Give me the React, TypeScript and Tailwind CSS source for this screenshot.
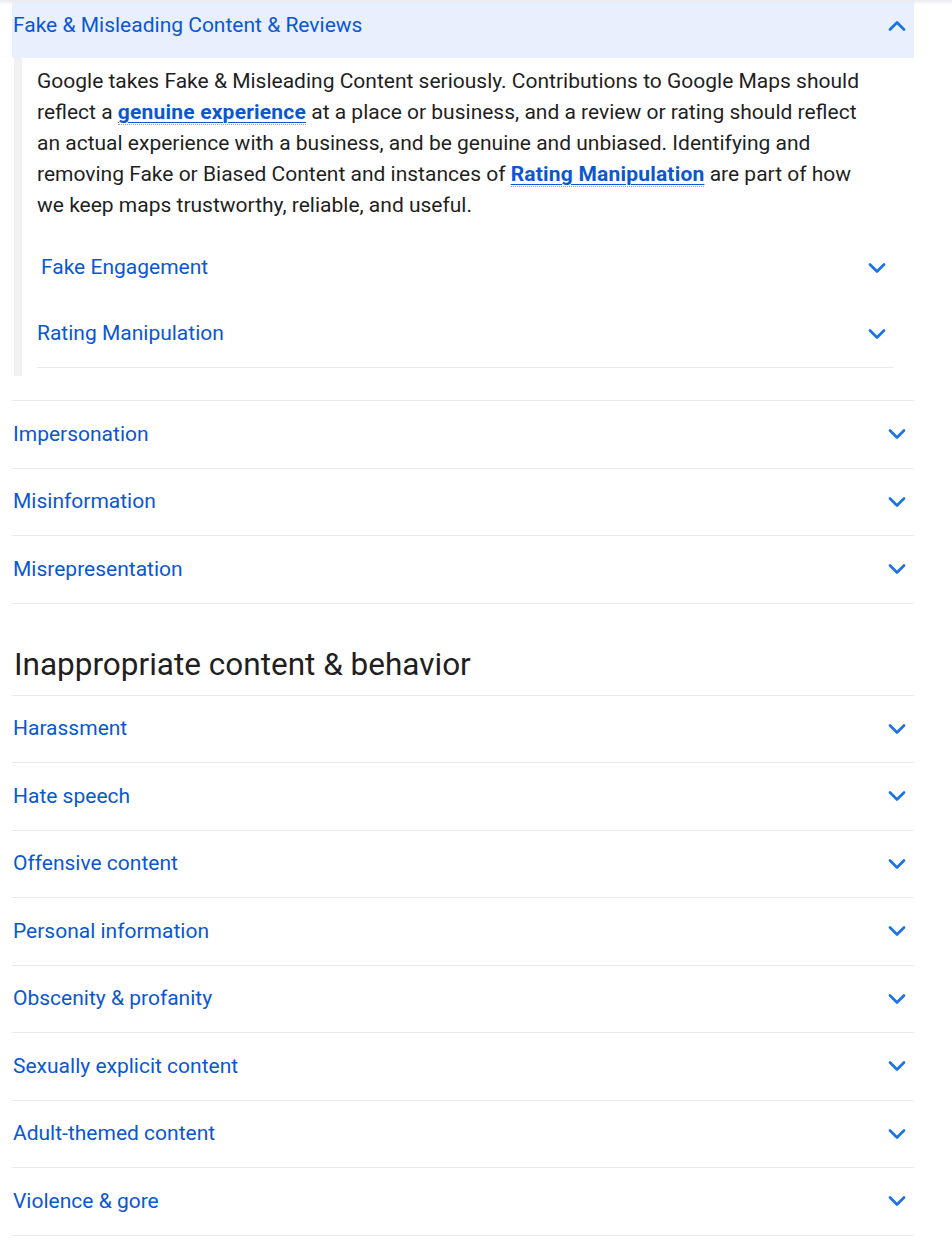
import { ChevronDown, ChevronUp } from "lucide-react"

const policyRows = ["Impersonation", "Misinformation", "Misrepresentation"]

const behaviorRows = [
    "Harassment",
    "Hate speech",
    "Offensive content",
    "Personal information",
    "Obscenity & profanity",
    "Sexually explicit content",
    "Adult-themed content",
    "Violence & gore",
]

function InlineLink({children}: {children: string}) {
    return (
        <a href="#" className="font-bold tracking-[0.2px] text-[#0b57d0] underline decoration-1 underline-offset-[3px] border-b border-dotted border-[#9aa0a6]">
            {children}
        </a>
    )
}

function Row({title}: {title: string}) {
    return (
        <div className="h-[67.5px] border-t border-[#e8eaed] flex items-center justify-between pl-[1px] pr-[3px]">
            <span className="text-[21px] text-[#0b57d0]">{title}</span>
            <ChevronDown className="w-[28px] h-[28px] text-[#1a73e8]" strokeWidth={2.3}/>
        </div>
    )
}

function SubRow({title, indent, tall}: {title: string, indent?: boolean, tall?: boolean}) {
    return (
        <div className={tall ? "h-[67px] flex items-center justify-between pr-[3px]" : "h-[65px] flex items-center justify-between pr-[3px]"}>
            <span className={indent ? "pl-[4px] text-[21px] text-[#0b57d0]" : "text-[21px] text-[#0b57d0]"}>{title}</span>
            <ChevronDown className="w-[28px] h-[28px] text-[#1a73e8]" strokeWidth={2.3}/>
        </div>
    )
}

export default function App() {
    return (
        <div className="relative bg-white min-h-screen font-['Roboto',sans-serif]">
            <div className="absolute top-0 left-0 right-0 h-[5px] bg-gradient-to-b from-[#ececf0] to-transparent"/>

            <div className="w-[902px] ml-[12px]">
                <section>
                    <div className="h-[58px] bg-[#e8f0fe] flex items-center justify-between pl-[1px] pr-[3px] pb-[6px]">
                        <span className="text-[21px] text-[#0b57d0]">Fake &amp; Misleading Content &amp; Reviews</span>
                        <ChevronUp className="w-[28px] h-[28px] text-[#1a73e8]" strokeWidth={2.3}/>
                    </div>

                    <div className="flex">
                        <div className="w-[8px] ml-[2px] bg-[#f1f1f1]"/>
                        <div className="flex-1 pl-[15px] pr-[20px] pb-[8px]">
                            <p className="pt-[8px] text-[21px] leading-[31px] text-[#1f1f1f] whitespace-nowrap">
                                Google takes Fake &amp; Misleading Content seriously. Contributions to Google Maps should<br/>
                                reflect a <InlineLink>genuine experience</InlineLink> at a place or business, and a review or rating should reflect<br/>
                                an actual experience with a business, and be genuine and unbiased. Identifying and<br/>
                                removing Fake or Biased Content and instances of <InlineLink>Rating Manipulation</InlineLink> are part of how<br/>
                                we keep maps trustworthy, reliable, and useful.
                            </p>
                            <div className="mt-[14px] border-b border-[#e8eaed]">
                                <SubRow title="Fake Engagement" indent/>
                                <SubRow title="Rating Manipulation" tall/>
                            </div>
                        </div>
                    </div>
                </section>

                <div className="mt-[24px] border-b border-[#e8eaed]">
                    {policyRows.map(title => <Row key={title} title={title}/>)}
                </div>

                <h2 className="pt-[43px] pb-[12px] pl-[2px] text-[31.5px] leading-[36px] text-[#1f1f1f]">
                    Inappropriate content &amp; behavior
                </h2>

                <div className="border-b border-[#e8eaed]">
                    {behaviorRows.map(title => <Row key={title} title={title}/>)}
                </div>
            </div>

            <div className="mt-[12px] h-px bg-[#e4e8f4]"/>
        </div>
    )
}
